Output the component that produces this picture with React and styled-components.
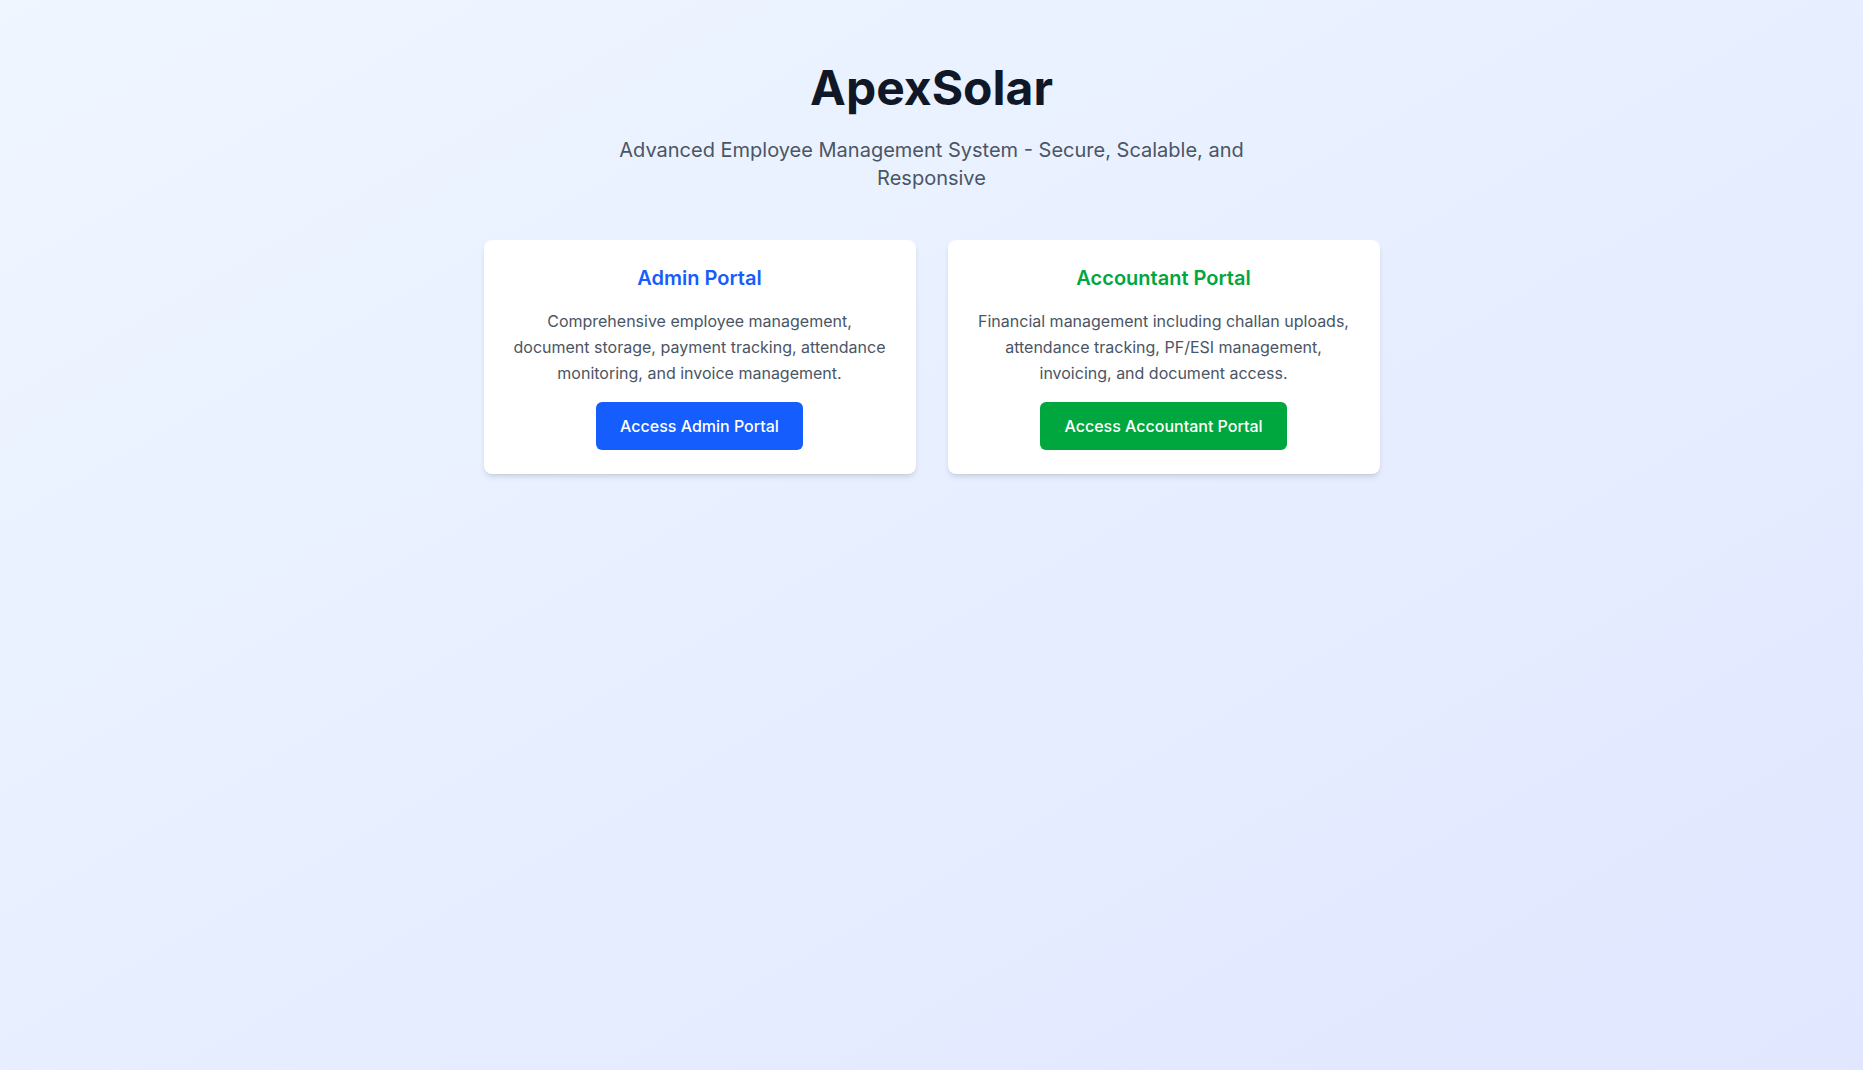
import React from "react";
import styled, { createGlobalStyle } from "styled-components";

const GlobalStyle = createGlobalStyle`
  * { box-sizing: border-box; }
  html, body { margin: 0; padding: 0; }
  body {
    font-family: Inter, "Noto Sans", "Liberation Sans", sans-serif;
    -webkit-font-smoothing: antialiased;
  }
`;

const Page = styled.div`
  min-height: 1070px;
  background: linear-gradient(to bottom right, #eff6ff, #e0e7ff);
  padding: 64px 16px;
`;

const Container = styled.div`
  max-width: 896px;
  margin: 0 auto;
`;

const Header = styled.header`
  text-align: center;
  margin-bottom: 48px;
`;

const Title = styled.h1`
  margin: 0 0 24px;
  font-size: 48px;
  line-height: 1;
  font-weight: 700;
  color: #101828;
`;

const Subtitle = styled.p`
  margin: 0 auto;
  max-width: 672px;
  font-size: 20px;
  line-height: 28px;
  color: #4a5565;
`;

const Grid = styled.div`
  display: grid;
  grid-template-columns: 1fr 1fr;
  gap: 32px;
`;

const Card = styled.div`
  background: #ffffff;
  border-radius: 8px;
  padding: 24px;
  text-align: center;
  box-shadow: 0 4px 6px -1px rgba(0, 0, 0, 0.1), 0 2px 4px -2px rgba(0, 0, 0, 0.1);
`;

const CardTitle = styled.h2`
  margin: 0 0 16px;
  font-size: 20px;
  line-height: 28px;
  font-weight: 600;
  color: ${(p) => p.$color};
`;

const CardText = styled.p`
  margin: 0 0 16px;
  font-size: 16px;
  line-height: 26px;
  color: #4a5565;
`;

const Button = styled.button`
  display: inline-block;
  border: none;
  border-radius: 6px;
  padding: 12px 24px;
  font-family: inherit;
  font-size: 16px;
  line-height: 24px;
  font-weight: 500;
  color: #ffffff;
  background: ${(p) => p.$bg};
  cursor: pointer;
`;

const portals = [
  {
    title: "Admin Portal",
    color: "#155dfc",
    text: "Comprehensive employee management, document storage, payment tracking, attendance monitoring, and invoice management.",
    button: "Access Admin Portal",
  },
  {
    title: "Accountant Portal",
    color: "#00a63e",
    text: "Financial management including challan uploads, attendance tracking, PF/ESI management, invoicing, and document access.",
    button: "Access Accountant Portal",
  },
];

export default function App() {
  return (
    <>
      <GlobalStyle />
      <Page>
        <Container>
          <Header>
            <Title>ApexSolar</Title>
            <Subtitle>
              Advanced Employee Management System - Secure, Scalable, and Responsive
            </Subtitle>
          </Header>
          <Grid>
            {portals.map((p) => (
              <Card key={p.title}>
                <CardTitle $color={p.color}>{p.title}</CardTitle>
                <CardText>{p.text}</CardText>
                <Button $bg={p.color}>{p.button}</Button>
              </Card>
            ))}
          </Grid>
        </Container>
      </Page>
    </>
  );
}
